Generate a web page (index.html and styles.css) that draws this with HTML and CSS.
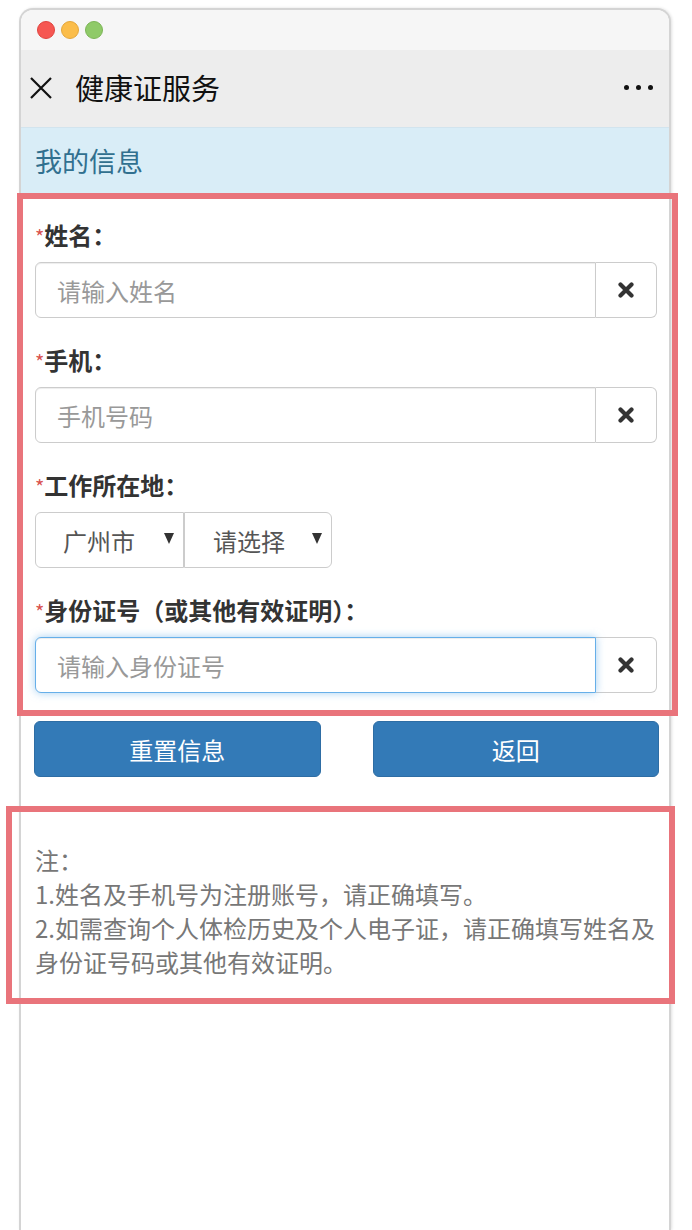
FILE: index.html
```html
<!DOCTYPE html>
<html lang="zh-CN">
<head>
    <meta charset="UTF-8">
    <meta name="viewport" content="width=device-width, initial-scale=1.0">
    <title>健康证服务</title>
    <link rel="stylesheet" href="styles.css">
</head>
<body>
    <div class="phone">
        <div class="title_bar">
            <span class="light red"></span>
            <span class="light yellow"></span>
            <span class="light green"></span>
        </div>
        <div class="nav_bar">
            <svg class="close_icon" width="24" height="24" viewBox="0 0 24 24">
                <path d="M2 2 L22 22 M22 2 L2 22" stroke="#111" stroke-width="2.2" fill="none"/>
            </svg>
            <span class="nav_title">健康证服务</span>
            <span class="more"><i></i><i></i><i></i></span>
        </div>
        <div class="panel_heading">我的信息</div>

        <form class="form_box">
            <div class="form_group">
                <label class="form_label"><span class="star">*</span>姓名：</label>
                <div class="input_group">
                    <input class="form_input" type="text" placeholder="请输入姓名">
                    <span class="input_addon">
                        <svg width="18" height="16" viewBox="0 0 18 16"><path d="M3.5 2.5 L14.5 13.5 M14.5 2.5 L3.5 13.5" stroke="#333" stroke-width="4.2" stroke-linecap="round"/></svg>
                    </span>
                </div>
            </div>
            <div class="form_group">
                <label class="form_label"><span class="star">*</span>手机：</label>
                <div class="input_group">
                    <input class="form_input" type="text" placeholder="手机号码">
                    <span class="input_addon">
                        <svg width="18" height="16" viewBox="0 0 18 16"><path d="M3.5 2.5 L14.5 13.5 M14.5 2.5 L3.5 13.5" stroke="#333" stroke-width="4.2" stroke-linecap="round"/></svg>
                    </span>
                </div>
            </div>
            <div class="form_group">
                <label class="form_label"><span class="star">*</span>工作所在地：</label>
                <div class="select_row">
                    <div class="select_box city">
                        <span>广州市</span>
                        <svg width="10" height="11" viewBox="0 0 10 11"><path d="M0 0 H10 L5 11 Z" fill="#333"/></svg>
                    </div>
                    <div class="select_box area">
                        <span>请选择</span>
                        <svg width="10" height="11" viewBox="0 0 10 11"><path d="M0 0 H10 L5 11 Z" fill="#333"/></svg>
                    </div>
                </div>
            </div>
            <div class="form_group">
                <label class="form_label"><span class="star">*</span>身份证号（或其他有效证明）：</label>
                <div class="input_group">
                    <input class="form_input is_focus" type="text" placeholder="请输入身份证号">
                    <span class="input_addon">
                        <svg width="18" height="16" viewBox="0 0 18 16"><path d="M3.5 2.5 L14.5 13.5 M14.5 2.5 L3.5 13.5" stroke="#333" stroke-width="4.2" stroke-linecap="round"/></svg>
                    </span>
                </div>
            </div>
        </form>

        <div class="btn_row">
            <button class="btn" type="button">重置信息</button>
            <button class="btn" type="button">返回</button>
        </div>

        <div class="note_box">
            注：<br>
            1.姓名及手机号为注册账号，请正确填写。<br>
            2.如需查询个人体检历史及个人电子证，请正确填写姓名及身份证号码或其他有效证明。
        </div>
    </div>
</body>
</html>
```

FILE: styles.css
```css
* {
    box-sizing: border-box;
}
body {
    margin: 0;
    background: #fff;
    font-family: "Noto Sans CJK SC", "Noto Sans", sans-serif;
    color: #333;
    overflow: hidden;
}
.phone {
    margin: 8px 0 0 19px;
    width: 652px;
    min-height: 1222px;
    border: 2px solid #d4d4d4;
    border-bottom: 0;
    border-radius: 14px 14px 0 0;
    box-shadow: 1px 0 3px rgba(0, 0, 0, 0.12);
    background: #fff;
}
.title_bar {
    height: 40px;
    display: flex;
    align-items: center;
    gap: 6px;
    padding-left: 16px;
    background: #f6f6f6;
    border-radius: 12px 12px 0 0;
}
.light {
    width: 18px;
    height: 18px;
    border-radius: 50%;
}
.red {
    background: #f65752;
    border: 1px solid #e0443f;
}
.yellow {
    background: #fbbd4a;
    border: 1px solid #e5a73a;
}
.green {
    background: #8fca68;
    border: 1px solid #7cb556;
}
.nav_bar {
    height: 77px;
    display: flex;
    align-items: center;
    padding: 0 16px 4px 8px;
    background: #ededed;
}
.close_icon {
    margin-top: 2px;
}
.nav_title {
    margin-left: 22px;
    font-size: 29px;
    color: #111;
}
.more {
    margin-left: auto;
    margin-top: 2px;
    display: flex;
    gap: 7px;
}
.more i {
    width: 5px;
    height: 5px;
    border-radius: 50%;
    background: #111;
}
.panel_heading {
    height: 66px;
    display: flex;
    align-items: center;
    padding-left: 14px;
    background: #d9edf7;
    border-top: 1px solid #d2e4ee;
    color: #31708f;
    font-size: 27px;
}
.form_box {
    margin: 0 -9px 0 -4px;
    padding: 19px 15px 17px 12px;
    border: 6px solid #e9747b;
}
.form_group {
    margin-bottom: 25px;
}
.form_group:last-child {
    margin-bottom: 0;
}
.form_label {
    display: block;
    height: 33px;
    margin-bottom: 11px;
    font-size: 24px;
    font-weight: bold;
    line-height: 33px;
    color: #333;
}
.star {
    color: #d9534f;
    font-size: 20px;
    font-weight: normal;
    line-height: 1;
}
.input_group {
    display: flex;
    height: 56px;
}
.form_input {
    flex: 1;
    min-width: 0;
    height: 56px;
    padding: 0 21px;
    border: 1px solid #ccc;
    border-radius: 6px 0 0 6px;
    box-shadow: inset 0 1px 1px rgba(0, 0, 0, 0.075);
    font-family: inherit;
    font-size: 24px;
    color: #555;
    outline: none;
}
.form_input::placeholder {
    color: #999;
}
.form_input.is_focus {
    position: relative;
    border-color: #66afe9;
    box-shadow: inset 0 1px 1px rgba(0, 0, 0, 0.075), 0 0 8px rgba(102, 175, 233, 0.6);
}
.input_addon {
    width: 61px;
    display: flex;
    align-items: center;
    justify-content: center;
    border: 1px solid #ccc;
    border-left: 0;
    border-radius: 0 6px 6px 0;
    background: #fff;
}
.select_row {
    display: flex;
}
.select_box {
    height: 56px;
    display: flex;
    align-items: center;
    justify-content: space-between;
    padding: 0 9px 0 27px;
    border: 1px solid #ccc;
    font-size: 24px;
    color: #555;
}
.select_box svg {
    margin-top: -4px;
}
.city {
    width: 149px;
    border-radius: 6px 0 0 6px;
}
.area {
    width: 148px;
    padding-left: 28px;
    border-radius: 0 6px 6px 0;
}
.btn_row {
    display: grid;
    grid-template-columns: 1fr 1fr;
    gap: 52px;
    padding: 5px 10px 0 13px;
}
.btn {
    height: 56px;
    background: #337ab7;
    border: 1px solid #2e6da4;
    border-radius: 6px;
    color: #fff;
    font-family: inherit;
    font-size: 24px;
}
.note_box {
    margin: 29px -6px 0 -15px;
    padding: 31px 10px 19px 23px;
    border: 6px solid #e9747b;
    font-size: 24px;
    line-height: 34px;
    color: #777;
}
```
